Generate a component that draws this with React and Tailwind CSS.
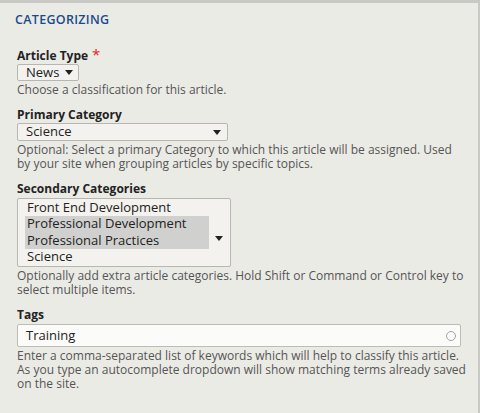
import React from "react";

function Arrow({ w = 8, h = 5 }) {
  return (
    <svg width={w} height={h} viewBox="0 0 8 5" className="shrink-0">
      <path d="M0 0 H8 L4 5 Z" fill="#222" />
    </svg>
  );
}

function Field({ label, required, gap = "mt-0", children, help }) {
  return (
    <div className="mb-[10px]">
      <div className="flex items-start font-bold text-[12px] leading-[16px] text-[#222]">
        {label}
        {required && <span className="ml-[4px] -mt-[1px] text-[#e4231b] font-normal text-[15px] leading-[15px]">*</span>}
      </div>
      <div className={gap}>{children}</div>
      <p className="mt-[2px] text-[12px] leading-[14px] text-[#555]">{help}</p>
    </div>
  );
}

export default function App() {
  const options = ["Front End Development", "Professional Development", "Professional Practices", "Science"];
  const selected = [1, 2];
  return (
    <div
      className="w-[480px] h-[413px] bg-[#ebebe6] border-t-[3px] border-t-[#c8c8c4] border-r-[2px] border-r-[#c9c9c5] overflow-hidden"
      style={{ fontFamily: '"Open Sans", "Noto Sans", sans-serif' }}
    >
      <div className="pl-[17px] pr-[12px] pt-[9px]">
        <h2 className="-ml-[2px] text-[12.5px] font-semibold leading-[16px] text-[#1b4a8a] tracking-[0.3px] mb-[20px]">CATEGORIZING</h2>

        <Field label="Article Type" required help="Choose a classification for this article.">
          <div className="w-[62px] h-[17px] flex items-center justify-between pl-[8px] pr-[5px] bg-[#f3f2ee] border border-[#b7b6b1] rounded-[2px] text-[13px] text-[#222]">
            <span>News</span>
            <Arrow />
          </div>
        </Field>

        <Field
          label="Primary Category"
          help="Optional: Select a primary Category to which this article will be assigned. Used by your site when grouping articles by specific topics."
        >
          <div className="w-[211px] h-[18px] flex items-center justify-between pl-[8px] pr-[6px] bg-[#f3f2ee] border border-[#b7b6b1] rounded-[2px] text-[13px] text-[#222]">
            <span>Science</span>
            <Arrow />
          </div>
        </Field>

        <Field
          label="Secondary Categories"
          gap="mt-[1px]"
          help="Optionally add extra article categories. Hold Shift or Command or Control key to select multiple items."
        >
          <div className="w-[214px] h-[69px] flex items-start bg-[#f3f2ee] border border-[#b7b6b1] rounded-[2px] pl-[7px] pr-[7px]">
            <div className="flex-1 flex flex-col">
              {options.map((o, i) => (
                <div
                  key={o}
                  className={`h-[16.5px] flex items-center text-[13px] text-[#222] pl-[2px] w-[184px] ${selected.includes(i) ? "bg-[#d0d0ce]" : ""}`}
                >
                  {o}
                </div>
              ))}
            </div>
            <div className="mt-[37px]">
              <Arrow />
            </div>
          </div>
        </Field>

        <Field
          label="Tags"
          gap="mt-[1px]"
          help="Enter a comma-separated list of keywords which will help to classify this article. As you type an autocomplete dropdown will show matching terms already saved on the site."
        >
          <div className="w-[444px] h-[23px] flex items-center justify-between pl-[8px] pr-[4px] bg-[#fbfbf9] border border-[#bdbcb7] rounded-[2px] text-[13px] text-[#222]">
            <span>Training</span>
            <span className="w-[10px] h-[10px] rounded-full border-[1.5px] border-[#a3a3a0]" />
          </div>
        </Field>
      </div>
    </div>
  );
}
